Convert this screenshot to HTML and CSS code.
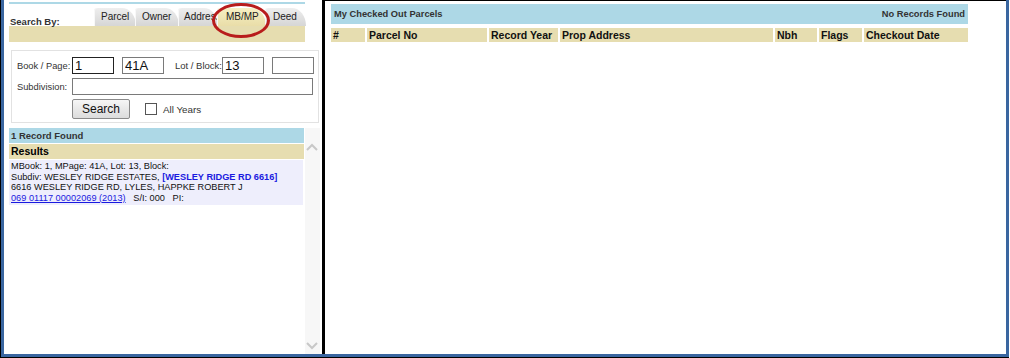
FILE: index.html
```html
<!DOCTYPE html>
<html lang="en">
<head>
    <meta charset="UTF-8">
    <title>Parcel Search</title>
    <link rel="stylesheet" href="styles.css">
</head>
<body>
    <div class="frame">
        <div class="inner">
            <!-- left: search panel -->
            <div class="left-panel">
                <div class="top-line"></div>
                <div class="tab-row">
                    <div class="search-by">Search By:</div>
                    <div class="tabs">
                        <div class="tab t-parcel">Parcel</div>
                        <div class="tab t-owner">Owner</div>
                        <div class="tab t-address">Address</div>
                        <div class="tab t-mbmp active">MB/MP</div>
                        <div class="tab t-deed">Deed</div>
                    </div>
                    <div class="circle"></div>
                </div>
                <div class="tab-bar"></div>

                <div class="form-box">
                    <div class="form-row">
                        <span class="label">Book / Page:</span>
                        <input class="txt focus" type="text" value="1">
                        <input class="txt" type="text" value="41A">
                        <span class="label lot">Lot / Block:</span>
                        <input class="txt" type="text" value="13">
                        <input class="txt last" type="text" value="">
                    </div>
                    <div class="form-row">
                        <span class="label">Subdivision:</span>
                        <input class="txt wide" type="text" value="">
                    </div>
                    <div class="form-row buttons">
                        <button class="btn">Search</button>
                        <span class="check"></span>
                        <span class="label">All Years</span>
                    </div>
                </div>

                <div class="results-wrap">
                    <div class="results">
                        <div class="found">1 Record Found</div>
                        <div class="results-head">Results</div>
                        <div class="record">
                            MBook: 1, MPage: 41A, Lot: 13, Block:<br>
                            Subdiv: WESLEY RIDGE ESTATES, <b class="addr">[WESLEY RIDGE RD 6616]</b><br>
                            6616 WESLEY RIDGE RD, LYLES, HAPPKE ROBERT J<br>
                            <a href="#">069 01117 00002069 (2013)</a> &nbsp; S/I: 000 &nbsp; PI:
                        </div>
                    </div>
                    <div class="scrollbar">
                        <svg width="14" height="10" viewBox="0 0 14 10"><path d="M2 8 L7 3 L12 8" fill="none" stroke="#c8c8c8" stroke-width="2"/></svg>
                        <svg width="14" height="10" viewBox="0 0 14 10"><path d="M2 2 L7 7 L12 2" fill="none" stroke="#c8c8c8" stroke-width="2"/></svg>
                    </div>
                </div>
            </div>

            <div class="divider"></div>

            <!-- right: checked out parcels -->
            <div class="right-panel">
                <div class="checked-bar">
                    <span>My Checked Out Parcels</span>
                    <span>No Records Found</span>
                </div>
                <div class="grid-head">
                    <div class="c-num">#</div>
                    <div class="c-parcel">Parcel No</div>
                    <div class="c-year">Record Year</div>
                    <div class="c-addr">Prop Address</div>
                    <div class="c-nbh">Nbh</div>
                    <div class="c-flags">Flags</div>
                    <div class="c-date">Checkout Date</div>
                </div>
            </div>
        </div>
    </div>
</body>
</html>
```

FILE: styles.css
```css
body {
    margin: 0;
    background: #fff;
    font-family: "Liberation Sans", Arial, sans-serif;
    font-size: 11px;
    color: #222;
}
.frame {
    width: 1008px;
    height: 357px;
    border-left: 1px solid #000;
    border-bottom: 1px solid #000;
}
.inner {
    display: flex;
    height: 100%;
    box-sizing: border-box;
    border-left: 3px solid #3a66a0;
    border-right: 3px solid #3a66a0;
    border-bottom: 3px solid #3a66a0;
}
.left-panel {
    width: 318px;
    display: flex;
    flex-direction: column;
    padding-left: 5px;
    box-sizing: border-box;
}
.top-line {
    margin-top: 2px;
    height: 2px;
    width: 296px;
    background: #add8e6;
}
.tab-row {
    position: relative;
    display: flex;
    align-items: flex-end;
    height: 20px;
    width: 296px;
    margin-top: 2px;
}
.search-by {
    width: 85px;
    flex-shrink: 0;
    font-size: 9.5px;
    font-weight: bold;
    color: #333;
    padding-left: 1px;
    line-height: 11px;
    margin-bottom: -1px;
    box-sizing: border-box;
}
.tabs {
    display: flex;
    align-items: flex-end;
}
.tab {
    flex-shrink: 0;
    box-sizing: border-box;
    height: 18px;
    line-height: 17px;
    padding: 0 0 0 7px;
    background: linear-gradient(#eeeeee, #d6d6d6);
    border-top-left-radius: 3px;
    border-top-right-radius: 14px 18px;
    font-size: 10px;
    color: #222;
    margin-right: -1px;
    white-space: nowrap;
    overflow: hidden;
    box-shadow: inset 1px 0 0 #f8f8f8;
}
.t-parcel { width: 42px; }
.t-owner { width: 44px; }
.t-address { width: 40px; padding-left: 6px; }
.t-mbmp { width: 49px; padding-left: 9px; }
.t-deed { width: 41px; padding-left: 8px; }
.tab.active {
    background: linear-gradient(#f6f0c4, #e9dda8);
}
.circle {
    position: absolute;
    left: 203px;
    top: -3px;
    width: 52px;
    height: 29px;
    border: 3px solid #b81c1c;
    border-radius: 50%;
}
.tab-bar {
    width: 296px;
    height: 16px;
    background: #e6ddb0;
}
.form-box {
    margin: 8px 0 0 2px;
    width: 308px;
    height: 73px;
    border: 1px solid #e2e2e2;
    box-sizing: border-box;
    padding: 5px 0 0 5px;
}
.form-row {
    display: flex;
    align-items: center;
    height: 19px;
    margin-bottom: 2px;
}
.form-row > * {
    flex-shrink: 0;
}
.label {
    color: #333;
    font-size: 9.3px;
    width: 55px;
    white-space: nowrap;
}
.label.lot {
    width: 44px;
    font-size: 9.5px;
    margin: 0 3px 0 3px;
}
.txt {
    width: 42px;
    height: 17px;
    box-sizing: border-box;
    border: 1px solid #7a7a7a;
    padding: 0 2px;
    margin: 0 8px 0 0;
    font-family: "Liberation Sans", Arial, sans-serif;
    font-size: 13px;
    color: #111;
}
.txt.focus { border-color: #222; }
.txt.last { margin-right: 0; }
.txt.wide { width: 241px; }
.buttons { height: 22px; margin-top: 1px; }
.btn {
    margin-left: 55px;
    width: 58px;
    height: 20px;
    border: 1px solid #8a8a8a;
    border-radius: 2px;
    background: linear-gradient(#f6f6f6, #dcdcdc);
    font-family: "Liberation Sans", Arial, sans-serif;
    font-size: 12px;
    color: #111;
    padding: 0;
}
.check {
    width: 10px;
    height: 10px;
    border: 1px solid #555;
    background: #fff;
    margin: 0 6px 0 15px;
}
.buttons .label { font-size: 9.8px; }
.results-wrap {
    display: flex;
    margin-top: 5px;
    flex: 1;
}
.results {
    width: 295px;
}
.found {
    height: 15px;
    line-height: 15px;
    background: #add8e6;
    font-weight: bold;
    font-size: 9.5px;
    color: #333;
    padding-left: 2px;
}
.results-head {
    height: 15px;
    line-height: 15px;
    background: #e6ddb0;
    font-weight: bold;
    font-size: 10.5px;
    color: #000;
    padding-left: 2px;
    margin-top: 1px;
    width: 293px;
}
.record {
    margin-top: 1px;
    background: #eeeefc;
    width: 292px;
    padding: 1px 0 2px 2px;
    line-height: 10.5px;
    font-size: 9.2px;
    color: #111;
    white-space: nowrap;
}
.record .addr { color: #1a1ae0; }
.record a { color: #1a1ae0; }
.scrollbar {
    width: 15px;
    background: #f7f7f7;
    display: flex;
    flex-direction: column;
    justify-content: space-between;
    padding: 14px 0 3px;
    margin-left: 1px;
}
.divider {
    width: 3px;
    background: #000;
}
.right-panel {
    flex: 1;
    border-top: 1px solid #000;
    padding: 3px 0 0 6px;
}
.checked-bar {
    width: 637px;
    height: 20px;
    background: #add8e6;
    display: flex;
    justify-content: space-between;
    align-items: center;
    padding: 0 3px;
    box-sizing: border-box;
    font-weight: bold;
    font-size: 9.3px;
    color: #333;
}
.grid-head {
    display: flex;
    gap: 2px;
    margin-top: 4px;
    width: 637px;
    font-weight: bold;
    font-size: 10.5px;
    color: #111;
}
.grid-head div {
    background: #e6ddb0;
    height: 14px;
    line-height: 14px;
    padding-left: 2px;
    box-sizing: border-box;
}
.c-num { width: 34px; }
.c-parcel { width: 120px; }
.c-year { width: 69px; }
.c-addr { width: 213px; }
.c-nbh { width: 42px; }
.c-flags { width: 43px; }
.c-date { flex: 1; }
```
